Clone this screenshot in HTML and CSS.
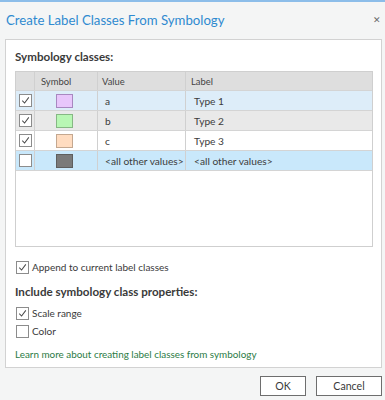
FILE: index.html
```html
<!DOCTYPE html>
<html>
<head>
  <title>Create Label Classes From Symbology</title>
  <link rel="stylesheet" href="styles.css">
</head>
<body>
  <div class="dialog">
    <div class="titlebar">
      <span class="title">Create Label Classes From Symbology</span>
      <span class="close">&#x2715;</span>
    </div>

    <div class="panel">
      <div class="heading first">Symbology classes:</div>
      <div class="grid">
        <div class="row head">
          <div class="cell c-check"></div>
          <div class="cell c-sym">Symbol</div>
          <div class="cell c-val">Value</div>
          <div class="cell c-lab">Label</div>
        </div>
        <div class="row sel">
          <div class="cell c-check"><span class="cb on"><svg viewBox="0 0 12 12"><path d="M2.5 6.2 L5 8.8 L9.6 2.6"/></svg></span></div>
          <div class="cell c-sym"><span class="swatch" style="background:#e8c6fb;border-color:#a888c0"></span></div>
          <div class="cell c-val">a</div>
          <div class="cell c-lab">Type 1</div>
        </div>
        <div class="row alt">
          <div class="cell c-check"><span class="cb on"><svg viewBox="0 0 12 12"><path d="M2.5 6.2 L5 8.8 L9.6 2.6"/></svg></span></div>
          <div class="cell c-sym"><span class="swatch" style="background:#b8f7b4;border-color:#86b884"></span></div>
          <div class="cell c-val">b</div>
          <div class="cell c-lab">Type 2</div>
        </div>
        <div class="row">
          <div class="cell c-check"><span class="cb on"><svg viewBox="0 0 12 12"><path d="M2.5 6.2 L5 8.8 L9.6 2.6"/></svg></span></div>
          <div class="cell c-sym"><span class="swatch" style="background:#ffdcc0;border-color:#c4a890"></span></div>
          <div class="cell c-val">c</div>
          <div class="cell c-lab">Type 3</div>
        </div>
        <div class="row hot">
          <div class="cell c-check"><span class="cb"></span></div>
          <div class="cell c-sym"><span class="swatch" style="background:#7a7a7a;border-color:#5e5e5e"></span></div>
          <div class="cell c-val">&lt;all other values&gt;</div>
          <div class="cell c-lab">&lt;all other values&gt;</div>
        </div>
      </div>

      <label class="option append"><span class="cb on"><svg viewBox="0 0 12 12"><path d="M2.5 6.2 L5 8.8 L9.6 2.6"/></svg></span>Append to current label classes</label>

      <div class="heading second">Include symbology class properties:</div>
      <label class="option"><span class="cb on"><svg viewBox="0 0 12 12"><path d="M2.5 6.2 L5 8.8 L9.6 2.6"/></svg></span>Scale range</label>
      <label class="option"><span class="cb"></span>Color</label>

      <a class="learn" href="#">Learn more about creating label classes from symbology</a>
    </div>

    <div class="buttons">
      <button class="btn ok">OK</button>
      <button class="btn cancel">Cancel</button>
    </div>
  </div>
</body>
</html>
```

FILE: styles.css
```css
body {
  margin: 0;
  font-family: Lato, "Noto Sans", sans-serif;
  color: #3c3c3c;
  background: #f4f5f5;
}
.dialog {
  width: 385px;
  height: 400px;
  box-sizing: border-box;
  border-top: 2px solid #8cbde9;
  background: #f4f5f5;
  overflow: hidden;
}
.titlebar {
  height: 37px;
  display: flex;
  align-items: center;
  justify-content: space-between;
  padding: 0 4px 2px 6px;
  box-sizing: border-box;
}
.title {
  font-size: 13.2px;
  color: #2f8ad0;
}
.close {
  font-size: 9px;
  color: #6a6a6a;
  margin-right: 0;
}
.panel {
  margin: 0 3px 0 5px;
  height: 329px;
  box-sizing: border-box;
  background: #fff;
  border: 1px solid #d2d2d2;
  padding: 0 8px 0 9px;
}
.heading {
  font-weight: 700;
  font-size: 11.6px;
  color: #3a3a3a;
  line-height: 16px;
}
.heading.first {
  margin-top: 9px;
  height: 22px;
}
.heading.second {
  margin-top: 8px;
  margin-bottom: 4px;
}
.grid {
  height: 176px;
  box-sizing: border-box;
  border: 1px solid #cfcfcf;
}
.row {
  display: flex;
  height: 20px;
  box-sizing: border-box;
  border-bottom: 1px solid #d4d4d4;
  background: #fff;
  font-size: 10.2px;
}
.row.head {
  height: 19px;
  background: #dedede;
  font-size: 9.4px;
  color: #444;
}
.row.sel {
  background: #ddedf9;
}
.row.alt {
  background: #e9e9e9;
}
.row.hot {
  background: #c9e8fb;
}
.cell {
  display: flex;
  align-items: center;
  box-sizing: border-box;
  border-right: 1px solid #d0d0d0;
  white-space: nowrap;
  overflow: hidden;
}
.c-check {
  width: 19px;
  justify-content: center;
}
.c-sym {
  width: 63px;
  justify-content: center;
}
.head .c-sym {
  justify-content: flex-start;
  padding-left: 6px;
}
.c-val {
  width: 88px;
  padding-left: 7px;
}
.head .c-val {
  padding-left: 4px;
}
.c-lab {
  flex: 1;
  padding-left: 8px;
  border-right: none;
}
.head .c-lab {
  padding-left: 5px;
}
.swatch {
  width: 15px;
  height: 12px;
  border: 1px solid;
  margin-right: 3px;
}
.cb {
  width: 13px;
  height: 13px;
  box-sizing: border-box;
  border: 1px solid #8c8c8c;
  background: #fff;
  display: inline-flex;
  align-items: center;
  justify-content: center;
  flex: none;
}
.cb svg {
  width: 11px;
  height: 11px;
}
.cb path {
  fill: none;
  stroke: #4a4a4a;
  stroke-width: 1.1;
}
.option {
  display: flex;
  align-items: center;
  height: 18px;
  font-size: 10px;
  color: #3a3a3a;
}
.option .cb {
  margin: 0 3px 0 1px;
}
.option.append {
  margin-top: 11px;
}
.learn {
  display: block;
  margin-top: 8px;
  font-size: 9.9px;
  color: #2b7b45;
  text-decoration: none;
}
.buttons {
  display: flex;
  justify-content: flex-end;
  gap: 10px;
  padding: 8px 3px 0 0;
}
.btn {
  height: 20px;
  box-sizing: border-box;
  background: #fff;
  border: 1px solid #6e6e6e;
  font-family: Lato, "Noto Sans", sans-serif;
  font-size: 10.6px;
  color: #3a3a3a;
  padding: 0;
}
.ok {
  width: 46px;
}
.cancel {
  width: 66px;
}
```
